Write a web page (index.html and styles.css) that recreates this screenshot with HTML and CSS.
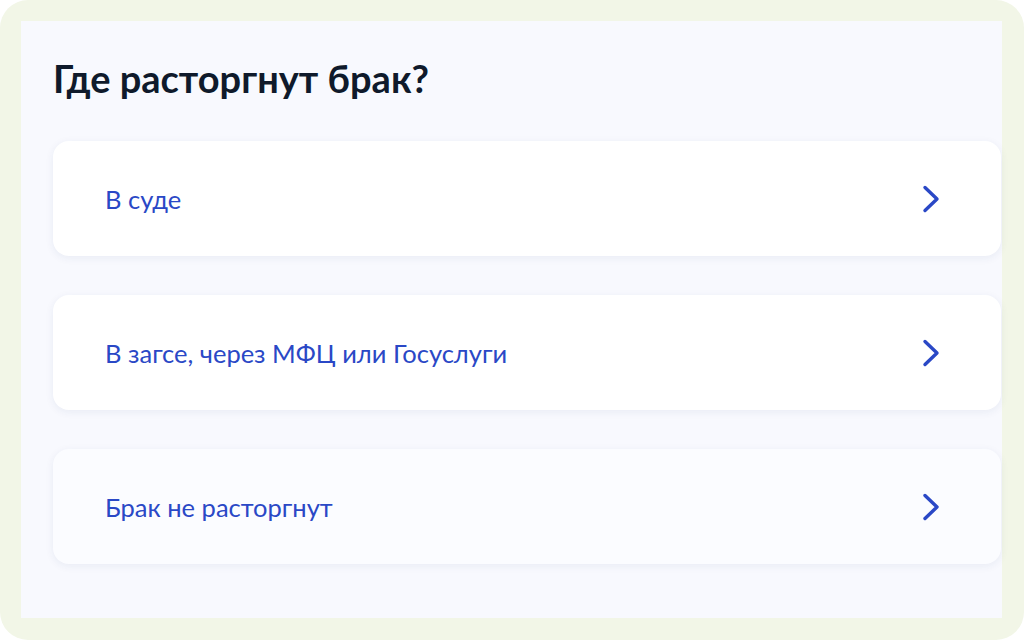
FILE: index.html
```html
<!DOCTYPE html>
<html lang="ru">
<head>
  <meta charset="UTF-8">
  <meta name="viewport" content="width=device-width, initial-scale=1.0">
  <title>Где расторгнут брак?</title>
  <link rel="stylesheet" href="styles.css">
</head>
<body>
  <div class="frame">
    <div class="panel">
      <h1 class="question">Где расторгнут брак?</h1>
      <ul class="answers">
        <li class="answer">
          <span>В суде</span>
          <svg class="chevron" width="24" height="32" viewBox="0 0 24 32"><path d="M6 4.5 L18 16 L6 27.5"/></svg>
        </li>
        <li class="answer">
          <span>В загсе, через МФЦ или Госуслуги</span>
          <svg class="chevron" width="24" height="32" viewBox="0 0 24 32"><path d="M6 4.5 L18 16 L6 27.5"/></svg>
        </li>
        <li class="answer answer-muted">
          <span>Брак не расторгнут</span>
          <svg class="chevron" width="24" height="32" viewBox="0 0 24 32"><path d="M6 4.5 L18 16 L6 27.5"/></svg>
        </li>
      </ul>
    </div>
  </div>
</body>
</html>
```

FILE: styles.css
```css
body {
  margin: 0;
  background: #ffffff;
  font-family: 'Lato', 'Noto Sans', sans-serif;
}
.frame {
  height: 640px;
  box-sizing: border-box;
  padding: 21px 22px 22px 21px;
  background: #f2f6e7;
  border-radius: 28px;
}
.panel {
  height: 100%;
  box-sizing: border-box;
  background: #f8f9fe;
  padding: 30px 1px 0 32px;
}
.question {
  margin: 0 0 36px;
  font-size: 38px;
  font-weight: 700;
  line-height: 54px;
  color: #0f1a2b;
}
.answers {
  list-style: none;
  margin: 0;
  padding: 0;
  display: flex;
  flex-direction: column;
  gap: 39px;
}
.answer {
  height: 115px;
  display: flex;
  align-items: center;
  justify-content: space-between;
  padding: 0 58px 0 52px;
  background: #ffffff;
  border-radius: 16px;
  box-shadow: 0 2px 8px rgba(30, 50, 120, 0.07);
  font-size: 25.5px;
  color: #2a48c6;
}
.answer-muted {
  background: #fbfcff;
}
.chevron path {
  fill: none;
  stroke: #2a48c6;
  stroke-width: 3.4;
  stroke-linecap: round;
  stroke-linejoin: round;
}
```
